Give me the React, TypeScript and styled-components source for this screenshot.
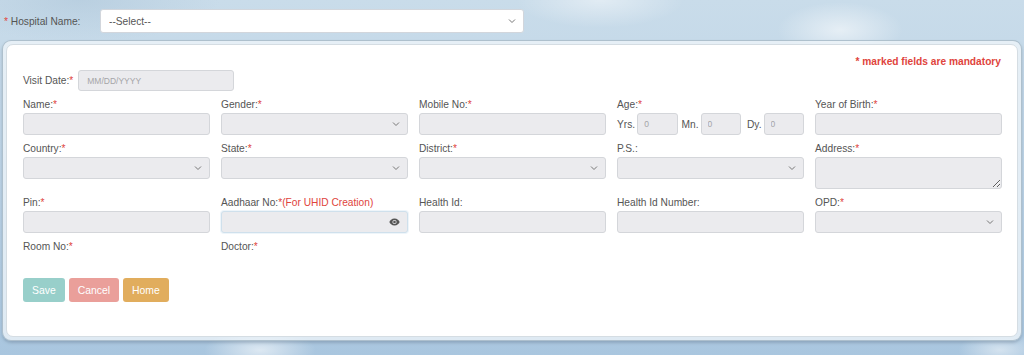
import React from 'react';
import styled, { createGlobalStyle } from 'styled-components';

const GlobalStyle = createGlobalStyle`
  html, body {
    margin: 0;
    padding: 0;
  }
  body {
    font-family: 'Liberation Sans', Arial, sans-serif;
    font-size: 10.2px;
    color: #555;
  }
`;

const Page = styled.div`
  width: 1024px;
  height: 355px;
  overflow: hidden;
  box-sizing: border-box;
  padding: 9px 2px 0 2px;
  background:
    radial-gradient(ellipse 90px 40px at 840px 30px, rgba(255, 255, 255, 0.55), transparent 70%),
    radial-gradient(ellipse 80px 30px at 260px 350px, rgba(255, 255, 255, 0.6), transparent 70%),
    radial-gradient(ellipse 60px 25px at 1000px 350px, rgba(255, 255, 255, 0.5), transparent 70%),
    radial-gradient(ellipse 120px 40px at 600px 0px, rgba(255, 255, 255, 0.45), transparent 70%),
    radial-gradient(ellipse 200px 60px at 80px 0px, rgba(170, 195, 215, 0.5), transparent 70%),
    linear-gradient(180deg, #c9dcea 0%, #bcd3e6 50%, #a9c6df 100%);
`;

const TopBar = styled.div`
  display: flex;
  align-items: center;
  height: 24px;
  padding-left: 2px;
`;

const TopLabel = styled.label`
  width: 96px;
  font-size: 10.2px;
  color: #555;
`;

const Star = styled.span`
  color: #e0443c;
`;

const SelectWrap = styled.div<{ $width?: number }>`
  position: relative;
  width: ${(p) => (p.$width ? `${p.$width}px` : '100%')};
`;

const TopSelect = styled.select`
  appearance: none;
  width: 100%;
  height: 24px;
  box-sizing: border-box;
  border: 1px solid #d2d6dc;
  border-radius: 3px;
  background: #fff;
  padding: 0 8px;
  font-family: inherit;
  font-size: 10.2px;
  color: #555;
`;

const Chevron = styled.svg`
  position: absolute;
  right: 8px;
  top: 50%;
  transform: translateY(-50%);
  pointer-events: none;
`;

const CardFrame = styled.div`
  margin-top: 7px;
  border-radius: 9px;
  padding: 3px;
  background: rgba(240, 246, 250, 0.75);
  border: 1px solid rgba(160, 180, 195, 0.8);
  box-shadow: 0 2px 3px rgba(90, 110, 130, 0.35);
`;

const Card = styled.div`
  background: #fff;
  border-radius: 7px;
  border: 1px solid #d5dde3;
  padding: 10px 16px 34px 16px;
`;

const Mandatory = styled.div`
  text-align: right;
  color: #e0443c;
  font-weight: bold;
  font-size: 10.2px;
  line-height: 14px;
  margin-bottom: 1px;
`;

const VisitRow = styled.div`
  display: flex;
  align-items: center;
  gap: 5px;
  margin-bottom: 8px;
`;

const Grid = styled.div`
  display: grid;
  grid-template-columns: repeat(5, 187px);
  column-gap: 11px;
  row-gap: 8px;
`;

const Field = styled.div`
  display: flex;
  flex-direction: column;
`;

const Label = styled.label`
  font-size: 10.2px;
  line-height: 12px;
  margin-bottom: 2px;
  color: #555;
`;

const Note = styled.span`
  color: #e0443c;
`;

const Input = styled.input<{ $width?: number; $small?: boolean }>`
  width: ${(p) => (p.$width ? `${p.$width}px` : '100%')};
  height: ${(p) => (p.$small ? '21px' : '22px')};
  box-sizing: border-box;
  border: 1px solid #d4d6da;
  border-radius: 3px;
  background: #ebebee;
  padding: 0 8px;
  font-family: inherit;
  font-size: 8.5px;
  color: #888;
  &::placeholder {
    color: #a5a5a8;
  }
`;

const GraySelect = styled.select`
  appearance: none;
  width: 100%;
  height: 22px;
  box-sizing: border-box;
  border: 1px solid #d4d6da;
  border-radius: 3px;
  background: #ebebee;
  font-family: inherit;
`;

const TextArea = styled.textarea`
  width: 100%;
  height: 32px;
  box-sizing: border-box;
  border: 1px solid #d4d6da;
  border-radius: 3px;
  background: #ebebee;
  resize: vertical;
  display: block;
  font-family: inherit;
`;

const AgeRow = styled.div`
  display: flex;
  align-items: center;
  height: 22px;
`;

const AgeUnit = styled.span<{ $ml: number }>`
  margin-left: ${(p) => p.$ml}px;
  margin-right: 2px;
  font-size: 10.2px;
  color: #555;
`;

const AgeInput = styled(Input)`
  flex: 1;
  padding: 0 6px;
`;

const EyeWrap = styled.div`
  position: relative;
`;

const AadhaarInput = styled(Input)`
  border-color: #cfe0ec;
  box-shadow: 0 0 0 1px #eef5fa;
`;

const EyeIcon = styled.svg`
  position: absolute;
  right: 8px;
  top: 50%;
  transform: translateY(-50%);
`;

const Buttons = styled.div`
  display: flex;
  gap: 4px;
  margin-top: 23px;
`;

const Button = styled.button<{ $bg: string }>`
  height: 24px;
  padding: 0 9px;
  border: none;
  border-radius: 3px;
  background: ${(p) => p.$bg};
  color: #fff;
  font-family: inherit;
  font-size: 10.4px;
  opacity: 0.95;
`;

const Arrow: React.FC = () => (
  <Chevron width="8" height="5" viewBox="0 0 8 5">
    <path d="M1 1l3 3 3-3" fill="none" stroke="#777" strokeWidth="1" />
  </Chevron>
);

const Select: React.FC = () => (
  <SelectWrap>
    <GraySelect />
    <Arrow />
  </SelectWrap>
);

const Req: React.FC<{ text: string }> = ({ text }) => (
  <Label>
    {text}
    <Star>*</Star>
  </Label>
);

const App: React.FC = () => {
  return (
    <Page>
      <GlobalStyle />
      <TopBar>
        <TopLabel>
          <Star>*</Star> Hospital Name:
        </TopLabel>
        <SelectWrap $width={424}>
          <TopSelect defaultValue="">
            <option value="">--Select--</option>
          </TopSelect>
          <Arrow />
        </SelectWrap>
      </TopBar>

      <CardFrame>
        <Card>
          <Mandatory>* marked fields are mandatory</Mandatory>
          <VisitRow>
            <Label style={{ marginBottom: 0 }}>
              Visit Date:<Star>*</Star>
            </Label>
            <Input $width={156} $small placeholder="MM/DD/YYYY" />
          </VisitRow>

          <Grid>
            <Field>
              <Req text="Name:" />
              <Input />
            </Field>
            <Field>
              <Req text="Gender:" />
              <Select />
            </Field>
            <Field>
              <Req text="Mobile No:" />
              <Input />
            </Field>
            <Field>
              <Req text="Age:" />
              <AgeRow>
                <AgeUnit $ml={0}>Yrs.</AgeUnit>
                <AgeInput placeholder="0" />
                <AgeUnit $ml={4}>Mn.</AgeUnit>
                <AgeInput placeholder="0" />
                <AgeUnit $ml={6}>Dy.</AgeUnit>
                <AgeInput placeholder="0" />
              </AgeRow>
            </Field>
            <Field>
              <Req text="Year of Birth:" />
              <Input />
            </Field>

            <Field>
              <Req text="Country:" />
              <Select />
            </Field>
            <Field>
              <Req text="State:" />
              <Select />
            </Field>
            <Field>
              <Req text="District:" />
              <Select />
            </Field>
            <Field>
              <Label>P.S.:</Label>
              <Select />
            </Field>
            <Field>
              <Req text="Address:" />
              <TextArea />
            </Field>

            <Field>
              <Req text="Pin:" />
              <Input />
            </Field>
            <Field>
              <Label>
                Aadhaar No:<Star>*</Star>
                <Note>(For UHID Creation)</Note>
              </Label>
              <EyeWrap>
                <AadhaarInput />
                <EyeIcon width="11" height="8" viewBox="0 0 22 16">
                  <path d="M11 1C5.5 1 1.8 5.2 0.8 8c1 2.8 4.7 7 10.2 7s9.2-4.2 10.2-7C20.2 5.2 16.5 1 11 1z" fill="#555" />
                  <circle cx="11" cy="8" r="4.2" fill="#ebebee" />
                  <circle cx="11" cy="8" r="2.6" fill="#555" />
                </EyeIcon>
              </EyeWrap>
            </Field>
            <Field>
              <Label>Health Id:</Label>
              <Input />
            </Field>
            <Field>
              <Label>Health Id Number:</Label>
              <Input />
            </Field>
            <Field>
              <Req text="OPD:" />
              <Select />
            </Field>

            <Field>
              <Req text="Room No:" />
            </Field>
            <Field>
              <Req text="Doctor:" />
            </Field>
          </Grid>

          <Buttons>
            <Button $bg="#93cdc8">Save</Button>
            <Button $bg="#e99a95">Cancel</Button>
            <Button $bg="#e0a955">Home</Button>
          </Buttons>
        </Card>
      </CardFrame>
    </Page>
  );
};

export default App;
